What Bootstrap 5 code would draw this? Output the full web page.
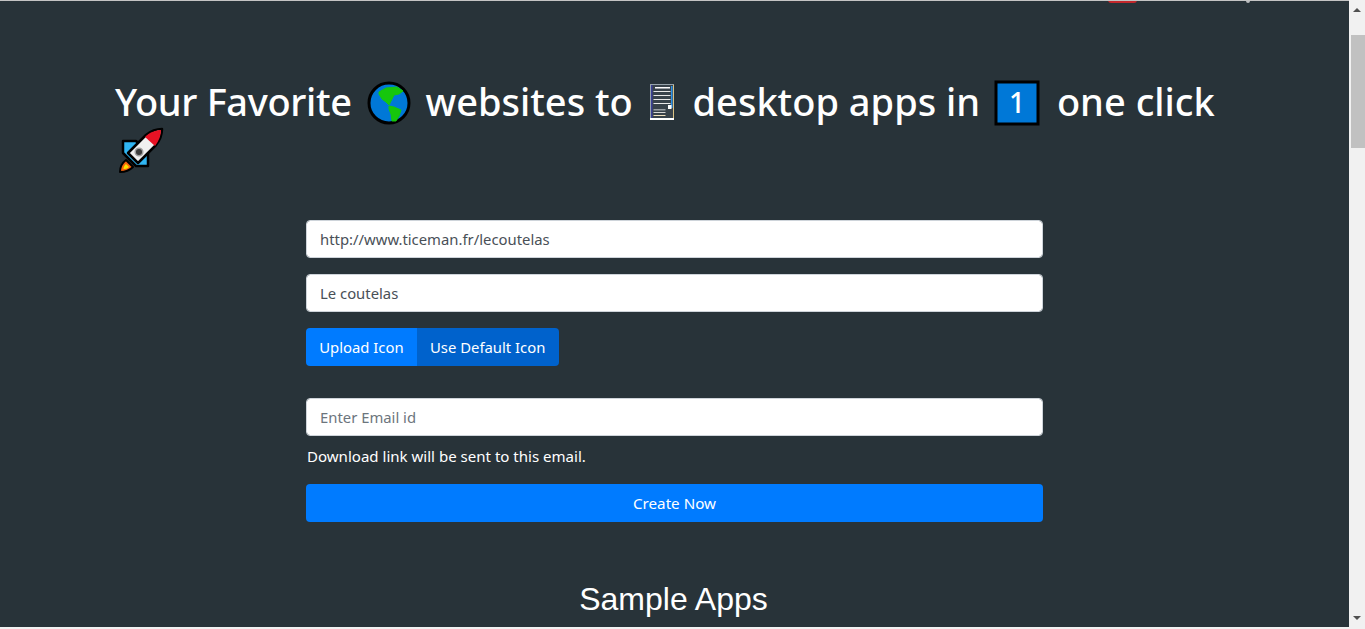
<!DOCTYPE html>
<html lang="en">
<head>
<meta charset="utf-8">
<title>Your Favorite websites to desktop apps</title>
<link href="https://cdn.jsdelivr.net/npm/bootstrap@5.3.0/dist/css/bootstrap.min.css" rel="stylesheet">
<style>
html,body{height:100%;overflow:hidden;}
body{background:#f1f1f1;font-family:"Noto Sans","Open Sans",sans-serif;font-size:16px;}
.viewport{height:627px;}
.page-main{background:#283339;border-top:1px solid #c4c4c4;width:1349px;flex:none;overflow:hidden;position:relative;color:#fff;}
.topscrap{position:absolute;top:-1px;height:3px;}
.scrap-red{left:1108px;width:29px;background:#c4282c;border-radius:0 0 4px 4px;}
.scrap-grey{left:1246px;width:4px;background:#b9bcbf;border-radius:0 0 2px 2px;}
.hero-title{margin:76px 0 0 115px;width:1125px;font-size:38px;font-weight:500;line-height:48px;color:#fff;}
.hero-lead{letter-spacing:-.33px;margin-right:4px;}
.emo{display:inline-block;vertical-align:-10px;}
.emo-globe{margin-right:4px;}
.emo-server{margin:0 -1px 0 -5px;}
.emo-one{margin:0 7px 0 4px;}
.emo-rocket{margin-left:3px;transform:translateY(-2px);}
.form-box{width:737px;margin:45px 0 0 306px;}
.form-box .form-control{height:38px;border:1px solid #ced4da;border-radius:4px;padding:6px 13px;color:#495057;font-size:14.85px;}
.form-box .form-control::placeholder{color:#6c757d;opacity:1;}
.form-box .btn{height:38px;border:0;border-radius:4px;font-size:14.85px;color:#fff;padding:0 13.2px;line-height:38px;}
.btn-blue{background:#007bff;}
.btn-deep{background:#0062cc;}
.mail-gap{margin-top:32px;}
.mail-hint{margin:10px 0 0 1px;font-size:15.05px;line-height:20px;color:#fff;}
.form-box .create-btn{margin-top:18px;font-size:15.2px;}
.sample-title{margin:56px 0 0;width:1347px;text-align:center;font-family:"Liberation Sans",Arial,sans-serif;font-size:32px;font-weight:400;line-height:42px;color:#fff;}
.sbar{width:16px;flex:none;background:#f1f1f1;position:relative;}
.sbar-thumb{position:absolute;left:2px;right:0;top:35px;height:113px;background:#c1c1c1;}
.sbar-up,.sbar-down{position:absolute;left:4px;width:0;height:0;border-left:4px solid transparent;border-right:4px solid transparent;}
.sbar-up{top:8px;border-bottom:4px solid #505050;}
.sbar-down{top:616px;border-top:4px solid #505050;}
</style>
</head>
<body>
<div class="viewport d-flex">
  <main class="page-main">
    <div class="topscrap scrap-red"></div>
    <div class="topscrap scrap-grey"></div>
    <h1 class="hero-title"><span class="hero-lead">Your Favorite</span>
      <svg class="emo emo-globe" width="46" height="46" viewBox="0 0 46 46" aria-hidden="true"><circle cx="23" cy="23" r="20" fill="#0078d7" stroke="#000" stroke-width="3"/><path d="M13 12L20 8L31 7L37 11L33 14L28 15L26 19L23 25L20 22L16 19L13 14Z" fill="#16c60c" stroke="#16c60c" stroke-linejoin="round"/><path d="M23 26L28 27L35 30L33 36L30 41L26 41L25 34L23 29Z" fill="#16c60c" stroke="#16c60c" stroke-linejoin="round"/></svg>
      websites to
      <svg class="emo emo-server" width="46" height="46" viewBox="0 0 46 46" aria-hidden="true"><rect x="12.5" y="4.5" width="23" height="35" fill="#38424a" stroke="#97a3ab"/><rect x="13" y="5" width="1.5" height="34" fill="#3a3f96"/><rect x="33" y="6" width="1.5" height="22" fill="#2f93e6"/><rect x="35" y="5" width="1" height="35" fill="#dcc283"/><rect x="12" y="38" width="24" height="2" fill="#fff"/><rect x="17" y="7" width="15" height="1.5" fill="#fff"/><rect x="15.5" y="11" width="17" height="1" fill="#e8e8e8"/><rect x="15.5" y="15" width="17" height="1" fill="#e8e8e8"/><rect x="15.5" y="19" width="17" height="1" fill="#e8e8e8"/><rect x="15.5" y="23" width="17" height="1" fill="#e8e8e8"/><rect x="30" y="25" width="3.5" height="4" fill="#fff"/><rect x="15.5" y="29" width="12" height="1.5" fill="#9aa0a4"/><rect x="15.5" y="32" width="12" height="1" fill="#d8d8d8"/><rect x="15.5" y="35" width="12" height="1" fill="#f3e3c0"/></svg>
      desktop apps in
      <svg class="emo emo-one" width="46" height="46" viewBox="0 0 46 46" aria-hidden="true"><rect x="2" y="2" width="42" height="42" fill="#0078d7" stroke="#000" stroke-width="3"/><text x="23" y="33" text-anchor="middle" font-family="Noto Sans, sans-serif" font-size="28" fill="#fff">1</text></svg>
      one click
      <svg class="emo emo-rocket" width="46" height="46" viewBox="0 0 46 46" aria-hidden="true"><path d="M5 14H18L30 26V39H18L5 26Z" fill="#30b5f2" stroke="#000" stroke-width="2.5" stroke-linejoin="round"/><path d="M10 26L28 8C33 4 39 2 44 2C44 8 42 13 38 18L20 36Z" fill="#f0f0f0" stroke="#000" stroke-width="2.5" stroke-linejoin="round"/><path d="M27 10C32 5 38 3 43 3C43 8 41 14 37 19Z" fill="#e81224"/><circle cx="21" cy="25" r="3.8" fill="#3c3c3c" stroke="#a0a0a0" stroke-width="1.5"/><path d="M8 33L15 40C12 43 7 45 2 45C2 40 4 36 8 33Z" fill="#f7630c" stroke="#000" stroke-width="2" stroke-linejoin="round"/><path d="M8 37L11 40C9 42 7 42 5.500 42C5.500 40 6.500 38 8 37Z" fill="#fce100"/></svg>
    </h1>
    <form class="form-box">
      <input class="form-control mb-3" type="text" value="http://www.ticeman.fr/lecoutelas">
      <input class="form-control mb-3" type="text" value="Le coutelas">
      <div class="d-flex">
        <button type="button" class="btn btn-blue rounded-end-0">Upload Icon</button>
        <button type="button" class="btn btn-deep rounded-start-0">Use Default Icon</button>
      </div>
      <input class="form-control mail-gap" type="email" placeholder="Enter Email id">
      <p class="mail-hint">Download link will be sent to this email.</p>
      <button type="button" class="btn btn-blue w-100 create-btn d-block">Create Now</button>
    </form>
    <h2 class="sample-title">Sample Apps</h2>
  </main>
  <div class="sbar"><div class="sbar-up"></div><div class="sbar-thumb"></div><div class="sbar-down"></div></div>
</div>
</body>
</html>
